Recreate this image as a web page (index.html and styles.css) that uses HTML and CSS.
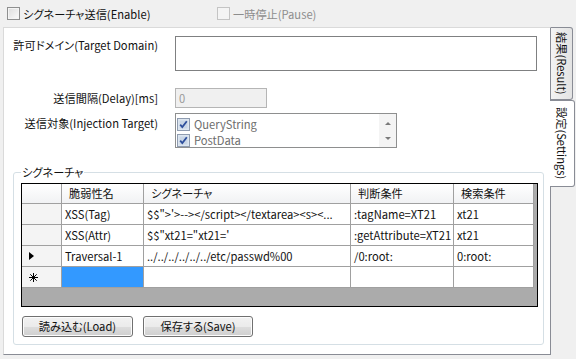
FILE: index.html
```html
<!DOCTYPE html>
<html lang="ja">

<head>
  <meta charset="UTF-8" />
  <title>シグネーチャ設定</title>
  <link rel="stylesheet" href="styles.css">
</head>

<body>
  <div class="topbar">
    <label class="chk"><span class="box"></span>シグネーチャ送信(Enable)</label>
    <label class="chk off"><span class="box"></span>一時停止(Pause)</label>
  </div>

  <div class="window">
    <div class="page">
      <div class="row row-domain">
        <div class="lbl">許可ドメイン(Target Domain)</div>
        <div class="txt domain"></div>
      </div>
      <div class="row row-delay">
        <div class="lbl">送信間隔(Delay)[ms]</div>
        <div class="txt delay">0</div>
      </div>
      <div class="row row-target">
        <div class="lbl">送信対象(Injection Target)</div>
        <div class="listbox">
          <div class="items">
            <div class="item"><span class="cb"><svg width="13" height="13" viewBox="0 0 13 13"><rect x="0.5" y="0.5" width="12" height="12" fill="#dde6f0" stroke="#8f9cb0"/><rect x="2.5" y="2.5" width="8" height="8" fill="#c9d6e6"/><path d="M3.2 6.6 L5.3 9 L9.8 3.3" fill="none" stroke="#2e4f9c" stroke-width="1.8"/></svg></span>QueryString</div>
            <div class="item"><span class="cb"><svg width="13" height="13" viewBox="0 0 13 13"><rect x="0.5" y="0.5" width="12" height="12" fill="#dde6f0" stroke="#8f9cb0"/><rect x="2.5" y="2.5" width="8" height="8" fill="#c9d6e6"/><path d="M3.2 6.6 L5.3 9 L9.8 3.3" fill="none" stroke="#2e4f9c" stroke-width="1.8"/></svg></span>PostData</div>
          </div>
          <div class="scroll">
            <span class="arrow up"></span>
            <span class="arrow down"></span>
          </div>
        </div>
      </div>

      <fieldset class="group">
        <legend>シグネーチャ</legend>
        <div class="grid">
          <div class="gh corner"></div>
          <div class="gh">脆弱性名</div>
          <div class="gh">シグネーチャ</div>
          <div class="gh">判断条件</div>
          <div class="gh">検索条件</div>

          <div class="rh"></div>
          <div class="gc">XSS(Tag)</div>
          <div class="gc">$$"&gt;'&gt;--&gt;&lt;/script&gt;&lt;/textarea&gt;&lt;s&gt;&lt;...</div>
          <div class="gc">:tagName=XT21</div>
          <div class="gc">xt21</div>

          <div class="rh"></div>
          <div class="gc">XSS(Attr)</div>
          <div class="gc">$$"xt21="xt21='</div>
          <div class="gc">:getAttribute=XT21</div>
          <div class="gc">xt21</div>

          <div class="rh"><span class="current"></span></div>
          <div class="gc">Traversal-1</div>
          <div class="gc">../../../../../../etc/passwd%00</div>
          <div class="gc">/0:root:</div>
          <div class="gc">0:root:</div>

          <div class="rh"><svg class="newrow" width="9" height="9" viewBox="0 0 9 9"><path d="M4.5 0 V9 M0 4.5 H9 M1.3 1.3 L7.7 7.7 M7.7 1.3 L1.3 7.7" stroke="#000" stroke-width="1"/></svg></div>
          <div class="gc selected"></div>
          <div class="gc"></div>
          <div class="gc"></div>
          <div class="gc"></div>
        </div>

        <div class="buttons">
          <button class="btn load">読み込む(Load)</button>
          <button class="btn save">保存する(Save)</button>
        </div>
      </fieldset>
    </div>

    <div class="tabs">
      <div class="tab result"><span>結果(Result)</span></div>
      <div class="tab settings"><span>設定(Settings)</span></div>
    </div>
  </div>
</body>

</html>
```

FILE: styles.css
```css
:root {
  --face: #f0f0f0;
  --edge: #898c95;
  --line: #a0a0a0;
  --gray-text: #6d6d6d;
}

body {
  margin: 0;
  width: 576px;
  height: 359px;
  overflow: hidden;
  background: var(--face);
  font-family: "Noto Sans CJK JP", sans-serif;
  font-feature-settings: "palt";
  font-size: 11.2px;
  line-height: 16px;
  color: #111;
}

/* top checkboxes */
.topbar {
  height: 27px;
  display: flex;
  align-items: center;
  padding-left: 7px;
}

.chk {
  display: flex;
  align-items: center;
  gap: 3px;
}

.chk:first-child {
  width: 210px;
}

.chk .box {
  width: 13px;
  height: 13px;
  box-sizing: border-box;
  border: 1px solid #8e8f8f;
  background: linear-gradient(135deg, #dcdcdc, #fbfbfb);
  box-shadow: inset 0 0 0 1px #f4f4f4;
}

.chk.off {
  color: #8d8d8d;
}

.chk.off .box {
  border-color: #c4c4c4;
  background: #f4f4f4;
}

/* tab page */
.window {
  display: flex;
}

.page {
  margin-left: 3px;
  width: 548px;
  height: 328px;
  box-sizing: border-box;
  border-top: 1px solid #dadada;
  border-left: 1px solid #dadada;
  border-right: 1px solid var(--edge);
  border-bottom: 1px solid var(--edge);
  background: #fff;
  padding-top: 8px;
}

.row {
  display: flex;
}

.lbl {
  width: 154px;
  margin-right: 17px;
  text-align: right;
  white-space: nowrap;
}

.row-domain .lbl {
  padding-top: 1px;
}

.row-delay {
  margin-top: 17px;
  align-items: center;
}

.row-target {
  margin-top: 5px;
}

.row-target .lbl {
  padding-top: 2px;
}

.txt {
  box-sizing: border-box;
  border: 1px solid #7f8081;
  background: #fff;
}

.domain {
  width: 362px;
  height: 35px;
}

.delay {
  width: 92px;
  height: 20px;
  background: var(--face);
  border-color: #b5b5b5;
  color: #9a9a9a;
  padding-left: 3px;
  line-height: 18px;
}

.listbox {
  width: 222px;
  height: 35px;
  box-sizing: border-box;
  border: 1px solid #8e8f8f;
  display: flex;
}

.items {
  flex: 1;
  padding: 2px 0 0 1px;
  color: var(--gray-text);
}

.item {
  display: flex;
  align-items: center;
  height: 16px;
  gap: 4px;
}

.cb {
  display: flex;
}

.scroll {
  width: 17px;
  background: #f4f4f4;
  display: flex;
  flex-direction: column;
  justify-content: space-between;
  align-items: center;
  padding: 8px 0 7px;
  box-sizing: border-box;
}

.arrow {
  width: 0;
  height: 0;
  border-left: 3px solid transparent;
  border-right: 3px solid transparent;
}

.arrow.up {
  border-bottom: 3px solid #7a7a7a;
}

.arrow.down {
  border-top: 3px solid #7a7a7a;
}

/* group box */
.group {
  margin: 17px 0 0 9px;
  width: 531px;
  min-width: 0;
  box-sizing: border-box;
  border: 1px solid #d5dfe5;
  border-radius: 3px;
  padding: 0 5px 7px 7px;
}

.group legend {
  padding: 0 1px;
  line-height: 14px;
}

.grid {
  margin-top: 4px;
  width: 517px;
  height: 124px;
  box-sizing: border-box;
  border: 1px solid #000;
  background: #ababab;
  display: grid;
  grid-template-columns: 40px 82px 207px 103px 80px;
  grid-template-rows: 20px 21px 21px 21px 21px;
  align-content: start;
}

.gh,
.rh,
.gc {
  box-sizing: border-box;
  border-right: 1px solid var(--line);
  border-bottom: 1px solid var(--line);
  white-space: nowrap;
  overflow: hidden;
}

.gh {
  background: linear-gradient(#ffffff, #f1f2f4);
  padding-left: 7px;
  line-height: 19px;
}

.rh {
  background: #f4f4f4;
  display: flex;
  align-items: center;
  padding-left: 7px;
}

.gc {
  background: #fff;
  padding-left: 3px;
  line-height: 20px;
}

.gc.selected {
  background: #3399ff;
}

.current {
  width: 0;
  height: 0;
  border-top: 4px solid transparent;
  border-bottom: 4px solid transparent;
  border-left: 5px solid #000;
}

.buttons {
  display: flex;
  gap: 10px;
  margin: 9px 0 0 1px;
}

.btn {
  height: 21px;
  padding: 0;
  font: inherit;
  line-height: 19px;
  color: #111;
  border: 1px solid #707070;
  border-radius: 3px;
  background: linear-gradient(#f2f2f2 0%, #ebebeb 50%, #dddddd 51%, #cfcfcf 100%);
  box-shadow: inset 0 0 0 1px #fcfcfc;
}

.btn.load {
  width: 111px;
}

.btn.save {
  width: 110px;
}

/* vertical tabs on the right */
.tabs {
  display: flex;
  flex-direction: column;
}

.tab {
  box-sizing: border-box;
  border: 1px solid var(--edge);
  border-left: 0;
  border-radius: 0 3px 3px 0;
  display: flex;
  align-items: center;
  justify-content: center;
}

.tab span {
  writing-mode: vertical-rl;
  text-orientation: sideways;
  line-height: 14px;
}

.tab.result {
  width: 22px;
  height: 73px;
  background: linear-gradient(to left, #e3e3e3, #f3f3f3);
}

.tab.settings {
  width: 25px;
  height: 87px;
  margin-left: -1px;
  background: #fff;
  border-left: 0;
}
```
